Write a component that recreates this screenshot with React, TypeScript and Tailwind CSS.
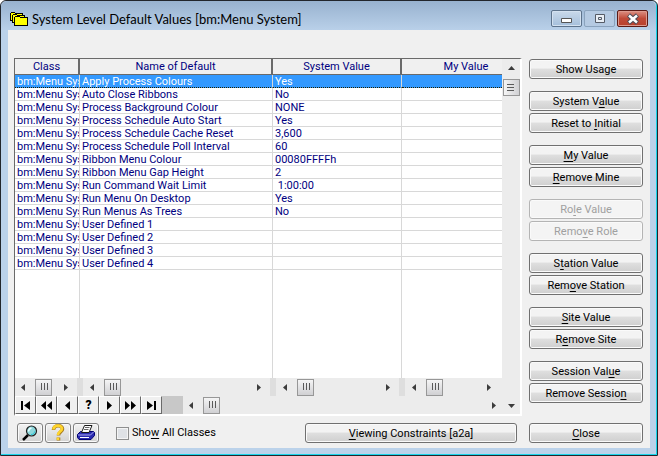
import type { ReactNode } from 'react';

type Row = { name: string; value: string };

const rows: Row[] = [
  { name: 'Apply Process Colours', value: 'Yes' },
  { name: 'Auto Close Ribbons', value: 'No' },
  { name: 'Process Background Colour', value: 'NONE' },
  { name: 'Process Schedule Auto Start', value: 'Yes' },
  { name: 'Process Schedule Cache Reset', value: '3,600' },
  { name: 'Process Schedule Poll Interval', value: '60' },
  { name: 'Ribbon Menu Colour', value: '00080FFFFh' },
  { name: 'Ribbon Menu Gap Height', value: '2' },
  { name: 'Run Command Wait Limit', value: ' 1:00:00' },
  { name: 'Run Menu On Desktop', value: 'Yes' },
  { name: 'Run Menus As Trees', value: 'No' },
  { name: 'User Defined 1', value: '' },
  { name: 'User Defined 2', value: '' },
  { name: 'User Defined 3', value: '' },
  { name: 'User Defined 4', value: '' },
];

// "_" goes before the shortcut letter
const groups: { labels: string[]; disabled?: boolean }[] = [
  { labels: ['Show Usage'] },
  { labels: ['System V_alue', 'Reset to _Initial'] },
  { labels: ['_My Value', '_Remove Mine'] },
  { labels: ['Ro_le Value', 'Remo_ve Role'], disabled: true },
  { labels: ['S_tation Value', 'Rem_ove Station'] },
  { labels: ['_Site Value', 'R_emove Site'] },
  { labels: ['Session Val_ue', 'Remove Sessio_n'] },
];

const Hot = ({ text }: { text: string }) => {
  const i = text.indexOf('_');
  if (i < 0) return <>{text}</>;
  return (
    <>
      {text.slice(0, i)}
      <span className="underline underline-offset-2">{text[i + 1]}</span>
      {text.slice(i + 2)}
    </>
  );
};

const PushButton = ({ text, disabled }: { text: string; disabled?: boolean }) => (
  <button
    disabled={disabled}
    className="h-5 w-full rounded-[3px] border border-[#707070] bg-linear-to-b from-[#f3f3f3] from-45% via-[#dfdfdf] via-50% to-[#cfcfcf] pt-px text-center leading-4 text-black inset-shadow-[0_0_0_1px_#fafafa] disabled:border-[#b4b4b4] disabled:bg-none disabled:bg-[#f4f4f4] disabled:text-[#a0a0a0]"
  >
    <Hot text={text} />
  </button>
);

const arrows = {
  left: 'M5 0v7L1 3.5z',
  right: 'M2 0v7l4-3.5z',
  up: 'M0 5h7L3.500 1z',
  down: 'M0 2h7L3.500 6z',
};

const ArrowButton = ({ dir }: { dir: keyof typeof arrows }) => (
  <button aria-label={dir} className="flex h-[17px] w-[17px] shrink-0 items-center justify-center">
    <svg className="h-[7px] w-[7px]" viewBox="0 0 7 7" fill="#3c3c3c">
      <path d={arrows[dir]} />
    </svg>
  </button>
);

const Thumb = ({ vertical }: { vertical?: boolean }) => (
  <div
    className={`flex h-[17px] w-[17px] shrink-0 items-center justify-center border border-[#979797] from-[#f5f5f5] to-[#d0d0d3] ${
      vertical ? 'bg-linear-to-r' : 'bg-linear-to-b'
    }`}
  >
    <svg className={vertical ? 'h-2 w-2' : 'h-2 w-2 rotate-90'} viewBox="0 0 8 8" stroke="#5a5a5a" shapeRendering="crispEdges">
      <path d="M0 .5h7M0 3.500h7M0 6.500h7" />
    </svg>
  </div>
);

const HScroll = () => (
  <div className="flex h-[18px] items-center bg-[#ececec]">
    <ArrowButton dir="left" />
    <div className="w-[3px]" />
    <Thumb />
    <div className="flex-1" />
    <ArrowButton dir="right" />
  </div>
);

const navShapes = [
  'M1 1h2v9H1zM10 1v9L4 5.500z',
  'M5 1v9L0 5.500zM11 1v9L6 5.500z',
  'M8 1v9L3 5.500z',
  '?',
  'M3 1v9l5-4.500z',
  'M0 1v9l5-4.500zM6 1v9l5-4.500z',
  'M1 1v9l6-4.500zM8 1h2v9H8z',
];

const NavButton = ({ shape }: { shape: string }) => (
  <button className="flex h-[18px] w-[21px] items-center justify-center border border-t-white border-l-white border-r-[#6a6a6a] border-b-[#6a6a6a] bg-[#f0f0f0]">
    {shape === '?' ? (
      <span className="text-xs leading-3 font-black">?</span>
    ) : (
      <svg className="h-[11px] w-[11px]" viewBox="0 0 11 11">
        <path d={shape} />
      </svg>
    )}
  </button>
);

const ToolButton = ({ label, children }: { label: string; children: ReactNode }) => (
  <button
    aria-label={label}
    className="flex h-5 w-[26px] items-center justify-center rounded-[3px] border border-[#808080] bg-linear-to-b from-[#f3f3f3] to-[#d2d2d2] inset-shadow-[0_0_0_1px_#fafafa]"
  >
    {children}
  </button>
);

const FolderIcon = () => (
  <svg className="h-4 w-[18px]" viewBox="0 0 18 16" fill="#ffff00" stroke="#000" shapeRendering="crispEdges">
    <path d="M.5 9.500v-7l1-1h3l1 1h7v7z" />
    <path d="M2.500 11.500v-7l1-1h3l1 1h7v7z" />
    <path d="M4.500 14.500v-8l1-1h4l1 1h7v8z" />
  </svg>
);

const cell = 'h-[13px] overflow-hidden border-r border-b border-[#d8d8d8] p-0 pt-px pl-0.5 leading-[11px] whitespace-pre';
const selected = 'bg-[#3399ff] text-white [&>td]:border-b-[#202000] [&>td]:border-b [&>td]:[border-bottom-style:dotted]';
const head = 'h-4 border-r-2 border-b border-[#6a6a6a] bg-[#f0f0f0] p-0 text-center leading-[14px] font-normal';

export default function App() {
  return (
    <div className="flex min-h-screen flex-col rounded-t-md border border-[#22262c] bg-[#bbd2ea] pr-[7px] pb-[7px] pl-[7px] font-[Roboto,'Liberation_Sans',sans-serif] text-[11px] text-black inset-shadow-[-1px_-1px_0_#18d4ea]">
      <header className="-mr-1.5 -ml-[7px] flex h-[29px] items-center rounded-t-md bg-linear-to-b from-[#98b2cf] to-[#b9d0e9] pt-1.5 pr-2 pl-[9px]">
        <FolderIcon />
        <h1 className="ml-1 flex-1 font-[Lato,sans-serif] text-[13px] leading-5 whitespace-nowrap">
          System Level Default Values [bm:Menu System]
        </h1>
        <div className="flex gap-0.5">
          <button aria-label="Minimize" className="flex h-[17px] w-[31px] items-center justify-center rounded-xs border border-[#5d738c] bg-linear-to-b from-[#c9d9ea] to-[#a5bfdb] inset-shadow-[0_0_0_1px_#d3e1f0]">
            <svg className="h-3 w-3" viewBox="0 0 12 12">
              <path d="M.5 5.500h10v4H.5z" fill="#fff" stroke="#555" />
            </svg>
          </button>
          <button aria-label="Maximize" className="flex h-[17px] w-[31px] items-center justify-center rounded-xs border border-[#8ba3bd] bg-[#b5cae2]">
            <svg className="h-3 w-3" viewBox="0 0 12 12" fill="#e8eef5" stroke="#555b66">
              <path d="M1.500 1.500h9v8h-9zM4.500 4.500h3v2h-3z" />
            </svg>
          </button>
          <button aria-label="Close window" className="flex h-[17px] w-[31px] items-center justify-center rounded-xs border border-[#5c1a15] bg-linear-to-b from-[#dc9084] via-[#c04a38] via-50% to-[#b8402c] inset-shadow-[0_0_0_1px_#dd9a8e]">
            <svg className="h-3 w-3" viewBox="0 0 12 12" fill="none">
              <path d="M1.500 2l9 8M10.500 2l-9 8" stroke="#4c4c58" strokeWidth="4.500" />
              <path d="M2 2.500l8 7M10 2.500l-8 7" stroke="#fff" strokeWidth="2.500" />
            </svg>
          </button>
        </div>
      </header>

      <main className="flex flex-1 flex-col bg-[#f0f0f0] pt-7 pr-[7px] pb-[5px] pl-1.5">
        <div className="flex flex-1 gap-[7px]">
          <section className="flex flex-1 border-t border-r-2 border-b-2 border-l border-t-[#6a6a6a] border-r-white border-b-white border-l-[#6a6a6a]">
            <div className="flex flex-1 flex-col">
              <table className="w-full flex-1 table-fixed border-separate border-spacing-0 bg-white text-[#000080]">
                <colgroup>
                  <col className="w-[65px]" />
                  <col className="w-[193px]" />
                  <col className="w-[129px]" />
                  <col />
                </colgroup>
                <thead>
                  <tr>
                    <th className={head}>Class</th>
                    <th className={head}>Name of Default</th>
                    <th className={head}>System Value</th>
                    <th className="h-4 border-b border-[#6a6a6a] bg-[#f0f0f0] p-0 pl-7 leading-[14px] font-normal">My Value</th>
                  </tr>
                </thead>
                <tbody>
                  {rows.map((row, i) => (
                    <tr key={row.name} className={i === 0 ? selected : ''}>
                      <td className={cell}>bm:Menu Sys</td>
                      <td className={cell}>{row.name}</td>
                      <td className={cell}>{row.value}</td>
                      <td className="border-b border-[#d8d8d8] p-0" />
                    </tr>
                  ))}
                  <tr className="h-full">
                    <td className="border-r border-[#d8d8d8]" />
                    <td className="border-r border-[#d8d8d8]" />
                    <td className="border-r border-[#d8d8d8]" />
                    <td />
                  </tr>
                </tbody>
                <tfoot>
                  <tr>
                    <td className="border-r-[3px] border-[#dedede] bg-[#ececec] p-0 pr-[3px]"><HScroll /></td>
                    <td className="border-x-[3px] border-[#dedede] bg-[#ececec] p-0 pr-[3px] pl-px"><HScroll /></td>
                    <td className="border-x-[3px] border-[#dedede] bg-[#ececec] p-0 pr-[3px] pl-px"><HScroll /></td>
                    <td className="border-l-[3px] border-[#dedede] bg-[#ececec] p-0 pr-[5px] pl-px"><HScroll /></td>
                  </tr>
                </tfoot>
              </table>
              <div className="flex h-[18px]">
                {navShapes.map((shape) => (
                  <NavButton key={shape} shape={shape} />
                ))}
                <div className="w-[21px] bg-[#c8c8c8]" />
                <div className="flex-1">
                  <HScroll />
                </div>
              </div>
            </div>
            <div className="flex w-[18px] flex-col items-center bg-[#ececec] pt-px">
              <ArrowButton dir="up" />
              <div className="h-0.5" />
              <Thumb vertical />
              <div className="flex-1" />
              <ArrowButton dir="down" />
            </div>
          </section>

          <aside className="flex w-[114px] flex-col gap-3 pt-px">
            {groups.map((group) => (
              <div key={group.labels[0]} className="flex flex-col gap-0.5">
                {group.labels.map((text) => (
                  <PushButton key={text} text={text} disabled={group.disabled} />
                ))}
              </div>
            ))}
          </aside>
        </div>

        <footer className="mt-[7px] flex items-center pl-[3px]">
          <div className="flex gap-0.5">
            <ToolButton label="Find">
              <svg className="h-4 w-[18px]" viewBox="0 0 18 16" fill="none">
                <path d="M2 15l5-5" stroke="#000" strokeWidth="2.500" />
                <circle cx="10.500" cy="6" r="5" fill="#8fd8dc" stroke="#202020" strokeWidth="1.200" />
                <path d="M7.500 6.500c0-2 1-3 3-3.500" stroke="#e8ffff" strokeWidth="1.500" />
                <path d="M10 9.500c2 0 3.500-1 3.500-3" stroke="#20c8d8" />
              </svg>
            </ToolButton>
            <ToolButton label="Help">
              <svg className="h-[18px] w-4" viewBox="0 0 16 18" fill="none">
                <path d="M3.500 6c0-5.500 9-5.500 9-1 0 3-4 3-4 6.500M8.500 13.500v3" stroke="#a87c20" strokeWidth="3.600" />
                <path d="M3.500 5.500c0-5 8.500-5 8.500-1 0 3-4 3-4 6.500M8 13.500v2.500" stroke="#ffd52c" strokeWidth="2.600" />
              </svg>
            </ToolButton>
            <ToolButton label="Print">
              <svg className="h-4 w-[18px]" viewBox="0 0 18 16" stroke="#000070">
                <path d="M.5 9.500l3-3h13l1 1v3l-3.500 4H2l-1.500-2z" fill="#2a2ab0" />
                <path d="M4.500 7.500l3-7h7.500l-3 7z" fill="#fff" stroke="#181818" />
                <path d="M8 2.500h4.500M7 4.500h4.500" stroke="#666" />
                <path d="M1 10h12.500l3-3" stroke="#a8a8f0" fill="none" />
                <path d="M3 12.500h9" stroke="#fff" />
              </svg>
            </ToolButton>
          </div>
          <label className="ml-[17px] flex items-center gap-[3px]">
            <input type="checkbox" className="h-[13px] w-[13px] appearance-none border border-[#8e8f8f] bg-[#dfe2e6] inset-shadow-[0_0_0_1px_#f4f4f4]" />
            <span>
              <Hot text="Sho_w All Classes" />
            </span>
          </label>
          <div className="mr-3 ml-auto w-[212px]">
            <PushButton text="_Viewing Constraints [a2a]" />
          </div>
          <div className="w-[114px]">
            <PushButton text="_Close" />
          </div>
        </footer>
      </main>
    </div>
  );
}
